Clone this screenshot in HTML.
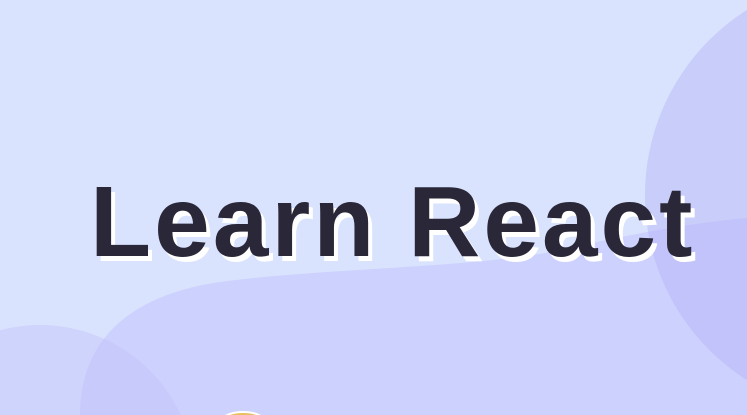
<!DOCTYPE html>
<html><head><style>
html,body{margin:0;padding:0;overflow:hidden;width:747px;height:415px}
body{position:relative;background:#d9e3fe;font-family:"Liberation Sans",sans-serif}
svg{position:absolute;left:0;top:0}
h1{position:absolute;left:90px;top:162px;margin:0;font-size:100px;font-weight:bold;color:#2a2838;letter-spacing:3px;text-shadow:4px 5px 0 #fff;white-space:nowrap;line-height:120px}
</style></head><body>
<svg width="747" height="415" viewBox="0 0 747 415">
<path d="M80 415 C80 340 130 295 220 282 C320 268 480 268 560 250 C640 232 700 222 747 218 L747 415 Z" fill="#cdd1fd"/>
<circle cx="864" cy="195" r="219" fill="#b5b2f6" opacity="0.45"/>
<circle cx="40" cy="480" r="155" fill="#c3c2fa" opacity="0.45"/>
<ellipse cx="243" cy="422" rx="22" ry="10" fill="#e8c060" stroke="#fff" stroke-width="2"/>
</svg>
<h1>Learn React</h1>
</body></html>
